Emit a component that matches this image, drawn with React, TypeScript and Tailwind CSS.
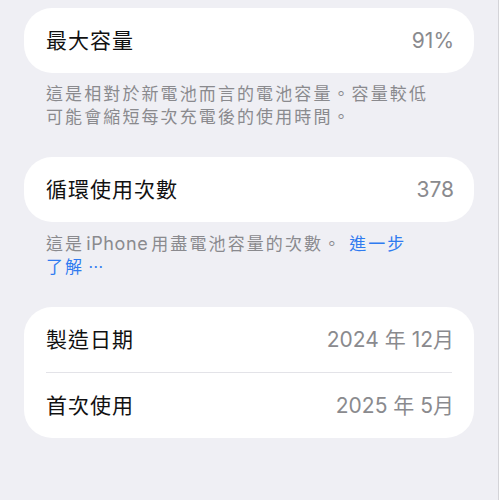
import React from 'react';

const font = { fontFamily: 'Inter, "Noto Sans CJK TC", "Noto Sans", sans-serif' };

function Row({ label, value }: { label: string; value: string }) {
  return (
    <div className="flex h-[65px] items-center justify-between pl-[22px] pr-5">
      <span className="text-[21px] tracking-[1px] text-[#111111]">{label}</span>
      <span className="text-[21px] text-[#8a8a8e]">{value}</span>
    </div>
  );
}

export default function App() {
  return (
    <div className="h-[500px] w-[499px] overflow-hidden border-r border-[#d4d4d8] bg-[#efeff4]" style={font}>
      <div className="px-6 pt-2">
        {/* 最大容量 */}
        <div className="rounded-[28px] bg-white">
          <Row label="最大容量" value="91%" />
        </div>
        <p className="mt-[10px] px-[22px] text-[17px] leading-[23px] tracking-[2.1px] text-[#8a8a8e]">
          這是相對於新電池而言的電池容量。容量較低
          <br />
          可能會縮短每次充電後的使用時間。
        </p>

        {/* 循環使用次數 */}
        <div className="mt-7 rounded-[28px] bg-white">
          <Row label="循環使用次數" value="378" />
        </div>
        <p className="mt-[10px] px-[22px] text-[17px] leading-[23px] tracking-[2.1px] text-[#8a8a8e]">
          這是<span className="ml-[2px] mr-[3px] text-[18px] tracking-[0.6px]">iPhone</span>用盡電池容量的次數。 <span className="text-[#2f7bf0]">進一步</span>
          <br />
          <span className="text-[#2f7bf0]">
            了解<span className="ml-[4px] text-[15px]">⋯</span>
          </span>
        </p>

        {/* 日期 */}
        <div className="mt-7 rounded-[28px] bg-white">
          <Row label="製造日期" value="2024 年 12月" />
          <div className="mx-[22px] h-px bg-[#e3e3e8]" />
          <Row label="首次使用" value="2025 年 5月" />
        </div>
      </div>
    </div>
  );
}
